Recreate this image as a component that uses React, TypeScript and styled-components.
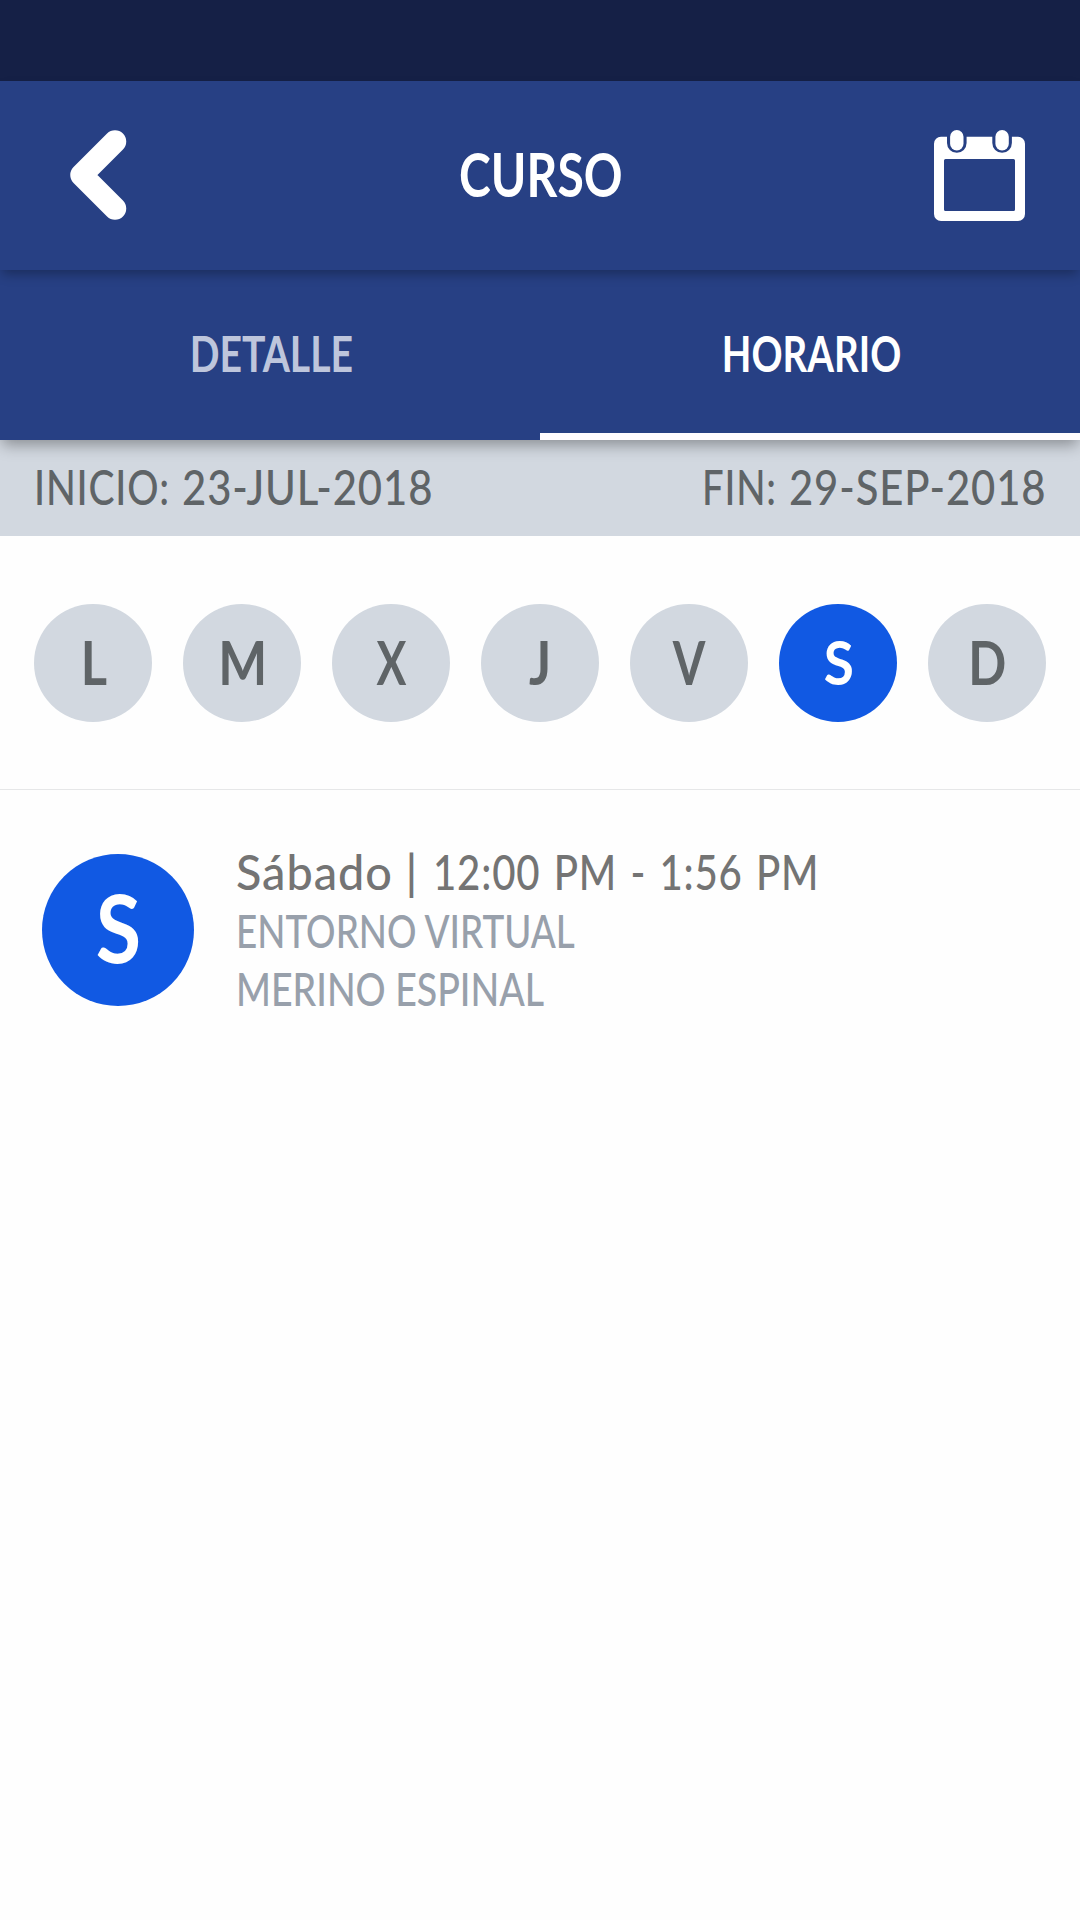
import React from 'react';
import styled, { createGlobalStyle } from 'styled-components';

const GlobalStyle = createGlobalStyle`
  *, *::before, *::after { box-sizing: border-box; }
  body {
    margin: 0;
    background: #fefefe;
    font-family: Lato, "Liberation Sans", sans-serif;
  }
`;

const Screen = styled.div`
  display: flex;
  flex-direction: column;
  width: 1080px;
  height: 1920px;
  overflow: hidden;
  background: #fefefe;
`;

const StatusBar = styled.div`
  flex: none;
  height: 81px;
  background: #152046;
`;

const Header = styled.header`
  position: relative;
  z-index: 2;
  flex: none;
  display: grid;
  grid-template-columns: 160px 1fr 160px;
  align-items: center;
  height: 189px;
  background: #274084;
  box-shadow: 0 6px 11px -2px rgba(0, 0, 0, 0.3);
`;

const IconButton = styled.button<{ $end?: boolean }>`
  display: flex;
  justify-content: ${(p) => (p.$end ? 'flex-end' : 'flex-start')};
  padding: ${(p) => (p.$end ? '0 55px 2px 0' : '0 0 2px 69px')};
  border: 0;
  background: none;
`;

/* Horizontally condensed text: the app's typeface is narrower than Lato. */
const Narrow = styled.span<{
  $stretch: number;
  $tracking?: number;
  $wordGap?: number;
  $width?: number;
  $origin?: string;
}>`
  display: block;
  width: ${(p) => (p.$width ? `${p.$width}px` : 'auto')};
  white-space: nowrap;
  letter-spacing: ${(p) => p.$tracking ?? 0}px;
  word-spacing: ${(p) => p.$wordGap ?? 0}px;
  transform: scaleX(${(p) => p.$stretch});
  transform-origin: ${(p) => p.$origin ?? 'center'};
`;

const Title = styled.h1`
  display: flex;
  justify-content: center;
  margin: 0;
  padding: 0 0 4px 2px;
  color: #fff;
  font-size: 61px;
  font-weight: 700;
  line-height: 74px;
`;

const Tabs = styled.nav`
  position: relative;
  z-index: 1;
  flex: none;
  display: grid;
  grid-template-columns: 1fr 1fr;
  height: 170px;
  background: #274084;
  box-shadow: 0 7px 14px -2px rgba(0, 0, 0, 0.34);
`;

const Tab = styled.button<{ $active?: boolean }>`
  display: flex;
  align-items: center;
  justify-content: center;
  padding: 7px 0 5px 3px;
  border: 0;
  border-bottom: 7px solid ${(p) => (p.$active ? '#fffcff' : 'transparent')};
  background: none;
  color: ${(p) => (p.$active ? '#fff' : '#bec6dc')};
  font-family: inherit;
  font-size: 50px;
  font-weight: 700;
  line-height: 60px;
`;

const Period = styled.div`
  flex: none;
  display: flex;
  align-items: center;
  justify-content: space-between;
  height: 96px;
  padding: 0 34px 4px;
  background: #d2d8e0;
  color: #5f6467;
  font-size: 48.5px;
  font-weight: 500;
  line-height: 60px;
`;

const PeriodDate = styled.div`
  display: flex;
`;

const Days = styled.div`
  flex: none;
  display: flex;
  align-items: center;
  justify-content: space-between;
  height: 254px;
  padding: 0 34px;
  border-bottom: 1px solid #e6e7e8;
`;

const Circle = styled.div<{ $size: number; $font: number; $drop: number; $active?: boolean }>`
  flex: none;
  display: flex;
  align-items: center;
  justify-content: center;
  width: ${(p) => p.$size}px;
  height: ${(p) => p.$size}px;
  padding: 0 0 ${(p) => p.$drop}px 1px;
  border-radius: 50%;
  background: ${(p) => (p.$active ? '#1159e3' : '#d2d8e0')};
  color: ${(p) => (p.$active ? '#fff' : '#5f6467')};
  font-size: ${(p) => p.$font}px;
  font-weight: 700;
  line-height: 1.2;
`;

const Session = styled.article`
  display: flex;
  align-items: center;
  gap: 42px;
  padding: 52px 42px 0;
`;

const SessionText = styled.div`
  display: flex;
  flex-direction: column;
  align-items: flex-start;
`;

const Time = styled.div`
  display: flex;
  padding-bottom: 2px;
  color: #747474;
  font-size: 49px;
  font-weight: 500;
  line-height: 58px;
`;

const Detail = styled.div`
  color: #98a0ab;
  font-size: 46px;
  font-weight: 500;
  line-height: 58px;
`;

const BackIcon = () => (
  <svg width="58" height="92" viewBox="0 0 58 92" fill="none">
    <path d="M46 12.5 12.5 46 46 79.5" stroke="#fff" strokeWidth="22.5" strokeLinecap="round" strokeLinejoin="round" />
  </svg>
);

const CalendarIcon = () => (
  <svg width="91" height="92" viewBox="0 0 91 92">
    <path
      fill="#fff"
      fillRule="evenodd"
      d="M7 7.7H84a7 7 0 0 1 7 7V85a7 7 0 0 1-7 7H7a7 7 0 0 1-7-7V14.7a7 7 0 0 1 7-7ZM11.5 30a1.5 1.5 0 0 0-1.5 1.5V80.5a1.5 1.5 0 0 0 1.5 1.5H79.5a1.5 1.5 0 0 0 1.5-1.5V31.5a1.5 1.5 0 0 0-1.5-1.5Z"
    />
    {[22.8, 68.1].map((x) => (
      <g key={x}>
        <rect x={x - 9.8} y="-4" width="19.6" height="27.8" rx="9.8" fill="#274084" />
        <rect x={x - 6.7} y="1" width="13.4" height="20.5" rx="6.7" fill="#fff" />
      </g>
    ))}
  </svg>
);

const days = [
  { letter: 'L', stretch: 0.83 },
  { letter: 'M', stretch: 0.85 },
  { letter: 'X', stretch: 0.73 },
  { letter: 'J', stretch: 0.85 },
  { letter: 'V', stretch: 0.77 },
  { letter: 'S', stretch: 0.9, active: true },
  { letter: 'D', stretch: 0.82 },
];

export default function App() {
  return (
    <>
      <GlobalStyle />
      <Screen>
        <StatusBar />
        <Header>
          <IconButton aria-label="Volver"><BackIcon /></IconButton>
          <Title><Narrow $stretch={0.787}>CURSO</Narrow></Title>
          <IconButton $end aria-label="Calendario"><CalendarIcon /></IconButton>
        </Header>
        <Tabs>
          <Tab><Narrow $stretch={0.783}>DETALLE</Narrow></Tab>
          <Tab $active><Narrow $stretch={0.77}>HORARIO</Narrow></Tab>
        </Tabs>
        <Period>
          <PeriodDate>
            <Narrow $stretch={0.805} $tracking={1} $width={147.5} $origin="left">INICIO:</Narrow>
            <Narrow $stretch={0.863} $tracking={1} $width={250} $origin="left">23-JUL-2018</Narrow>
          </PeriodDate>
          <PeriodDate>
            <Narrow $stretch={0.79} $tracking={1} $width={87} $origin="left">FIN:</Narrow>
            <Narrow $stretch={0.862} $tracking={1} $width={256.7} $origin="left">29-SEP-2018</Narrow>
          </PeriodDate>
        </Period>
        <Days>
          {days.map((d) => (
            <Circle key={d.letter} $size={118} $font={61} $drop={2} $active={d.active}>
              <Narrow $stretch={d.stretch}>{d.letter}</Narrow>
            </Circle>
          ))}
        </Days>
        <Session>
          <Circle $size={152} $font={93} $drop={5} $active>
            <Narrow $stretch={0.89}>S</Narrow>
          </Circle>
          <SessionText>
            <Time>
              <Narrow $stretch={0.955} $tracking={1} $width={197} $origin="left">Sábado |</Narrow>
              <Narrow $stretch={0.82} $tracking={1} $wordGap={2.8} $width={386} $origin="left">12:00 PM - 1:56 PM</Narrow>
            </Time>
            <Detail><Narrow $stretch={0.8} $origin="left">ENTORNO VIRTUAL</Narrow></Detail>
            <Detail><Narrow $stretch={0.815} $origin="left">MERINO ESPINAL</Narrow></Detail>
          </SessionText>
        </Session>
      </Screen>
    </>
  );
}
